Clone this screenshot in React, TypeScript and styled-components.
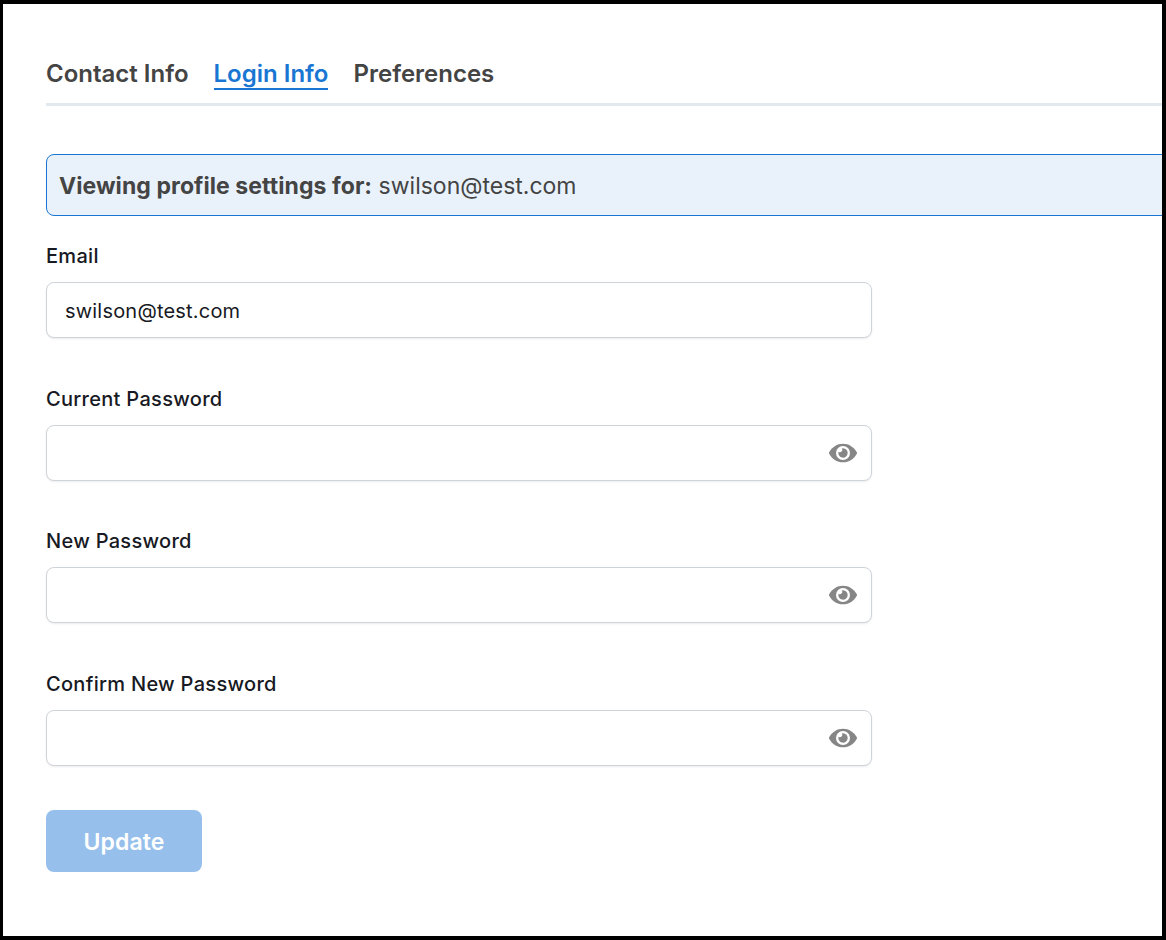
import React from 'react';
import styled, { createGlobalStyle } from 'styled-components';
import { FaEye } from 'react-icons/fa';

const Global = createGlobalStyle`
  html, body {
    margin: 0;
    padding: 0;
    background: #fff;
  }
  * {
    box-sizing: border-box;
  }
`;

const fields = [
  { label: 'Email', value: 'swilson@test.com', secret: false },
  { label: 'Current Password', value: '', secret: true },
  { label: 'New Password', value: '', secret: true },
  { label: 'Confirm New Password', value: '', secret: true },
];

export default function App() {
  return (
    <Frame>
      <Global />
      <Tabs>
        <Tab>Contact Info</Tab>
        <Tab $active>Login Info</Tab>
        <Tab>Preferences</Tab>
      </Tabs>
      <Banner>
        <strong>Viewing profile settings for:</strong> swilson@test.com
      </Banner>
      <Form>
        {fields.map((field) => (
          <Field key={field.label}>
            <Label>{field.label}</Label>
            <InputBox>
              <Input
                type={field.secret ? 'password' : 'text'}
                defaultValue={field.value}
              />
              {field.secret && (
                <EyeButton>
                  <FaEye size={28} />
                </EyeButton>
              )}
            </InputBox>
          </Field>
        ))}
        <Update>Update</Update>
      </Form>
    </Frame>
  );
}

const Frame = styled.div`
  width: 1166px;
  height: 940px;
  overflow: hidden;
  border: solid #000;
  border-width: 4px 4px 4px 3px;
  padding: 38px 0 0 43px;
  font-family: Inter, 'Liberation Sans', sans-serif;
  background: #fff;
`;
const Tabs = styled.div`
  display: flex;
  gap: 25px;
  height: 64px;
  width: 1120px;
  border-bottom: 3px solid #e2e9ef;
`;
const Tab = styled.div<{ $active?: boolean }>`
  height: 48px;
  padding-top: 19px;
  line-height: 26px;
  font-size: 24px;
  font-weight: 600;
  color: ${({ $active }) => ($active ? '#1976d2' : '#444444')};
  border-bottom: 2px solid ${({ $active }) => ($active ? '#1976d2' : 'transparent')};
`;
const Banner = styled.div`
  width: 1140px;
  height: 62px;
  margin-top: 48px;
  padding-left: 12px;
  line-height: 62px;
  font-size: 23px;
  color: #444444;
  background: #e9f2fb;
  border: 1px solid #1976d2;
  border-radius: 8px;
  strong {
    font-weight: 700;
    letter-spacing: 0.07px;
  }
`;
const Form = styled.div`
  width: 826px;
  margin-top: 26px;
`;
const Field = styled.div`
  height: 96px;
  margin-bottom: 46.7px;
  &:nth-last-child(2) {
    margin-bottom: 44px;
  }
`;
const Label = styled.div`
  height: 30px;
  line-height: 28px;
  margin-bottom: 10px;
  font-size: 20px;
  font-weight: 500;
  letter-spacing: 0.3px;
  color: #171923;
`;
const InputBox = styled.div`
  position: relative;
  height: 56px;
`;
const Input = styled.input`
  display: block;
  width: 100%;
  height: 100%;
  padding: 2px 18px 0;
  font-family: inherit;
  font-size: 20px;
  letter-spacing: 0.2px;
  color: #171923;
  background: #fff;
  border: 1px solid #cfd3da;
  border-radius: 8px;
  box-shadow: 0 1px 2px rgba(0, 0, 0, 0.08);
  outline: none;
`;
const EyeButton = styled.span`
  position: absolute;
  right: 15px;
  top: 14px;
  display: flex;
  color: #868686;
`;
const Update = styled.button`
  display: block;
  width: 156px;
  height: 62px;
  padding: 2px 0 0;
  font-family: inherit;
  font-size: 23px;
  font-weight: 600;
  letter-spacing: 0.1px;
  color: #fff;
  background: #96bfec;
  border: none;
  border-radius: 8px;
`;
